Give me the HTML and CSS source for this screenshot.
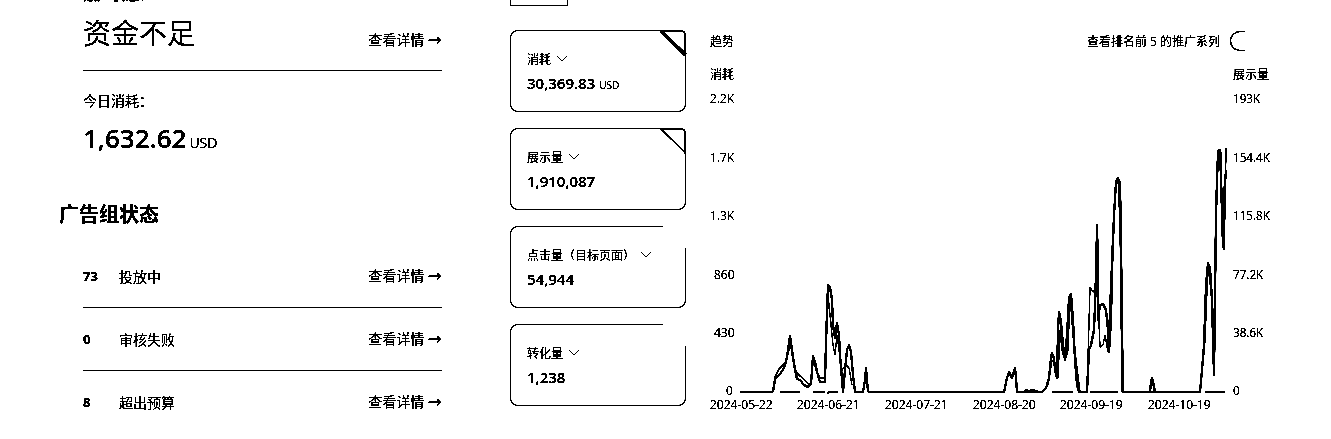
FILE: index.html
```html
<!DOCTYPE html>
<html lang="zh">
<head>
<meta charset="utf-8">
<title>广告账户概览</title>
<link rel="stylesheet" href="styles.css">
</head>
<body>
<main class="page">
  <section class="status">
    <div class="cut-label">账户状态：</div>
    <div class="alert-row">
      <div class="alert-title">资金不足</div>
      <a class="more">查看详情 <span class="arrow">→</span></a>
    </div>
    <div class="today-label">今日消耗：</div>
    <div class="today-value">1,632.62<small>USD</small></div>
    <h2 class="group-title">广告组状态</h2>
    <div class="group-row">
      <b class="count">73</b><span class="name">投放中</span>
      <a class="more">查看详情 <span class="arrow">→</span></a>
    </div>
    <div class="group-row">
      <b class="count">0</b><span class="name">审核失败</span>
      <a class="more">查看详情 <span class="arrow">→</span></a>
    </div>
    <div class="group-row">
      <b class="count">8</b><span class="name">超出预算</span>
      <a class="more">查看详情 <span class="arrow">→</span></a>
    </div>
  </section>

  <section class="metrics">
    <div class="stub"></div>
    <div class="card">
      <svg class="corner" viewBox="0 0 28 28"><path class="wipe" d="M2 0H28V26Z"/><path class="edge" d="M2 .75H22Q27.250 .75 27.250 6V26"/><path class="diag heavy" d="M3 1L27.500 25"/></svg>
      <div class="card-label">消耗 <svg class="chev" viewBox="0 0 10 6"><path d="M.5.5L5 5 9.500.5"/></svg></div>
      <div class="card-value">30,369.83 <small>USD</small></div>
    </div>
    <div class="card">
      <svg class="corner" viewBox="0 0 28 28"><path class="wipe" d="M2 0H28V26Z"/><path class="edge" d="M2 .75H22Q27.250 .75 27.250 6V26"/><path class="diag" d="M3 1L27.500 25"/></svg>
      <div class="card-label">展示量 <svg class="chev" viewBox="0 0 10 6"><path d="M.5.5L5 5 9.500.5"/></svg></div>
      <div class="card-value">1,910,087</div>
    </div>
    <div class="card">
      <svg class="corner" viewBox="0 0 28 28"><path class="wipe" d="M4 0H28V23Z"/></svg>
      <div class="card-label">点击量（目标页面） <svg class="chev" viewBox="0 0 10 6"><path d="M.5.5L5 5 9.500.5"/></svg></div>
      <div class="card-value">54,944</div>
    </div>
    <div class="card">
      <svg class="corner" viewBox="0 0 28 28"><path class="wipe" d="M4 0H28V23Z"/></svg>
      <div class="card-label">转化量 <svg class="chev" viewBox="0 0 10 6"><path d="M.5.5L5 5 9.500.5"/></svg></div>
      <div class="card-value">1,238</div>
    </div>
  </section>

  <section class="trend">
    <div class="trend-head">
      <span>趋势</span>
      <div class="top-five">查看排名前 5 的推广系列
        <svg class="toggle" viewBox="0 0 20 22"><path d="M18 1.500H13A9.500 9.500 0 0 0 13 20.500H18"/></svg>
      </div>
    </div>
    <div class="axis-titles"><span>消耗</span><span>展示量</span></div>
    <svg class="chart" viewBox="710 90 570 325">
      <g class="y-left">
        <text x="710" y="103">2.2K</text>
        <text x="710" y="162">1.7K</text>
        <text x="710" y="220">1.3K</text>
        <text x="714" y="279">860</text>
        <text x="714" y="337">430</text>
        <text x="726" y="395">0</text>
      </g>
      <g class="y-right">
        <text x="1233" y="103">193K</text>
        <text x="1233" y="162">154.4K</text>
        <text x="1233" y="220">115.8K</text>
        <text x="1233" y="279">77.2K</text>
        <text x="1233" y="337">38.6K</text>
        <text x="1233" y="395">0</text>
      </g>
      <g class="x-axis">
        <text x="710" y="409">2024-05-22</text>
        <text x="797" y="409">2024-06-21</text>
        <text x="885" y="409">2024-07-21</text>
        <text x="973" y="409">2024-08-20</text>
        <text x="1060" y="409">2024-09-19</text>
        <text x="1148" y="409">2024-10-19</text>
      </g>
      <path class="axis-line" d="M740 392H773M780 392H800M813 392H825M828 392H838M868 392H1000M1020 392H1042M1052 392H1073M1090 392H1118M1123 392H1150M1155 392H1200M1205 392H1225M828 392V394"/>
      <polyline class="spend" points="773,392 775,379 779,375 783,370 786,362 788,350 790,336 792,350 794,364 797,379 800,380 804,385 808,387 811,384 812,370 813,356 815,362 817,372 820,382 825,382 826,340 828,285 830,287 832,300 833,325 835,338 837,323 839,335 840,355 842,380 843,392 845,370 847,350 849,345 851,352 853,375 855,392 863,392 865,380 866,368 867,380 868,392"/>
      <polyline class="impr" points="773,392 775,377 779,369 783,365 786,361 789,350 790,340 793,360 796,372 800,376 804,379 808,384 811,383 813,358 816,370 820,378 825,378 828,295 833,345 835,355 837,335 842,370 846,365 849,368 852,385"/>
      <polyline class="spend" points="1000,392 1004,392 1007,378 1009,372 1012,378 1015,368 1016,378 1017,392 1024,392 1026,390 1029,391 1033,390 1038,392 1042,392 1046,388 1049,378 1051,358 1052,353 1054,358 1055,370 1057,378 1058,330 1059,312 1061,322 1063,345 1065,358 1067,335 1069,298 1071,294 1073,320 1075,360 1077,385 1079,392 1087,392 1089,350 1091,345 1094,330 1096,280 1097,225 1098,270 1098,320 1100,305 1103,304 1106,310 1108,330 1109,352 1111,320 1112,270 1114,215 1116,182 1118,178 1120,183 1121,240 1122,330 1123,392 1150,392 1151,382 1152,378 1153,382 1155,392 1195,392 1200,392 1202,370 1204,345 1206,285 1208,263 1210,268 1212,300 1213,340 1214,375 1215,300 1216,210 1218,152 1220,150 1221,180 1223,247 1224,195 1226,170"/>
      <polyline class="impr" points="1042,392 1048,385 1052,360 1056,365 1058,378 1060,330 1062,350 1065,361 1068,350 1070,295 1073,335 1080,392 1087,392 1090,287 1093,292 1095,290 1097,250 1098,300 1100,347 1103,345 1105,335 1108,352 1110,300 1113,230 1116,185 1118,178 1120,225 1122,392 1200,392 1205,340 1208,265 1212,300 1214,375 1216,230 1218,150 1221,153 1222,215 1224,250 1225,210 1226,148"/>
    </svg>
  </section>
</main>
</body>
</html>
```
FILE: styles.css
```css
* { box-sizing: border-box; }
html, body { margin: 0; height: 439px; overflow: hidden; background: #fff; }
body {
  color: #000;
  font-family: "Open Sans", "Noto Sans CJK SC", sans-serif;
  font-size: 14px;
}
.page {
  display: flex;
  height: 439px;
  background: #fff;
  filter: grayscale(1) brightness(.72) contrast(30);
}
a { color: inherit; }

/* left column */
.status { width: 359px; margin-left: 83px; margin-top: -15px; flex: none; }
.cut-label { height: 20px; line-height: 20px; font-weight: 600; font-size: 14px; }
.alert-row {
  display: flex; justify-content: space-between; align-items: flex-end;
  height: 66px; padding: 7px 0 17px; border-bottom: 1px solid #000;
}
.alert-title { font-size: 28px; line-height: 40px; }
.more { font-size: 14px; line-height: 20px; margin-left: auto; }
.alert-row .more { margin-bottom: 3px; }
.arrow { font-weight: 600; font-size: 14px; }
.today-label { margin-top: 20px; line-height: 20px; font-size: 14px; }
.today-value { margin-top: 8px; font-size: 26px; line-height: 38px; font-weight: 600; }
.today-value small { font-size: 14px; font-weight: 400; margin-left: 3px; }
.group-title { margin: 39px 0 0 -24px; font-size: 20px; line-height: 28px; font-weight: 700; }
.group-row {
  display: flex; align-items: center; height: 63px; border-bottom: 1px solid #000;
}
.group-title + .group-row { margin-top: 16px; }
.group-row:last-child { border-bottom-color: transparent; }
.count { width: 36px; font-weight: 700; font-size: 13px; }

/* metric cards */
.metrics { width: 176px; margin-left: 68px; flex: none; }
.stub { width: 58px; height: 6px; border: 1px solid #000; border-top: 0; margin-bottom: 24px; }
.card {
  position: relative; height: 82px; margin-bottom: 16px; padding: 18px 16px 0;
  border: 1px solid #000; border-radius: 8px;
}
.corner { position: absolute; top: -1px; right: -1px; width: 28px; height: 28px; overflow: visible; }
.wipe { fill: #fff; }
.edge { fill: none; stroke: #000; stroke-width: 1.500; }
.diag { fill: none; stroke: #000; stroke-width: 1.400; }
.diag.heavy { stroke-width: 3.400; }
.card-label { display: flex; align-items: center; gap: 5px; height: 20px; font-size: 12px; }
.chev { width: 10px; height: 6px; margin-left: 1px; overflow: visible; }
.chev path { fill: none; stroke: #000; stroke-width: 1; }
.card-value { margin-top: 3px; font-size: 15px; line-height: 22px; font-weight: 600; }
.card-value small { font-size: 10px; font-weight: 400; }

/* trend chart */
.trend { width: 570px; margin-left: 24px; flex: none; font-size: 12px; }
.trend-head {
  display: flex; justify-content: space-between; align-items: center;
  height: 24px; margin-top: 29px; padding-right: 33px;
}
.top-five { display: flex; align-items: center; gap: 7px; font-size: 12px; }
.toggle { width: 20px; height: 22px; }
.toggle path { fill: none; stroke: #000; stroke-width: 1.200; }
.axis-titles {
  display: flex; justify-content: space-between;
  height: 20px; line-height: 20px; margin-top: 12px; padding-right: 11px;
}
.chart { display: block; width: 570px; height: 325px; margin-top: 5px; overflow: visible; }
.chart text { font-size: 12px; fill: #000; }
.chart .y-right text { font-size: 11.700px; }
.spend, .impr { fill: none; stroke: #000; stroke-linejoin: round; }
.spend { stroke-width: 2; }
.impr { stroke-width: 1.100; }
.axis-line { fill: none; stroke: #000; stroke-width: 2; }
```
